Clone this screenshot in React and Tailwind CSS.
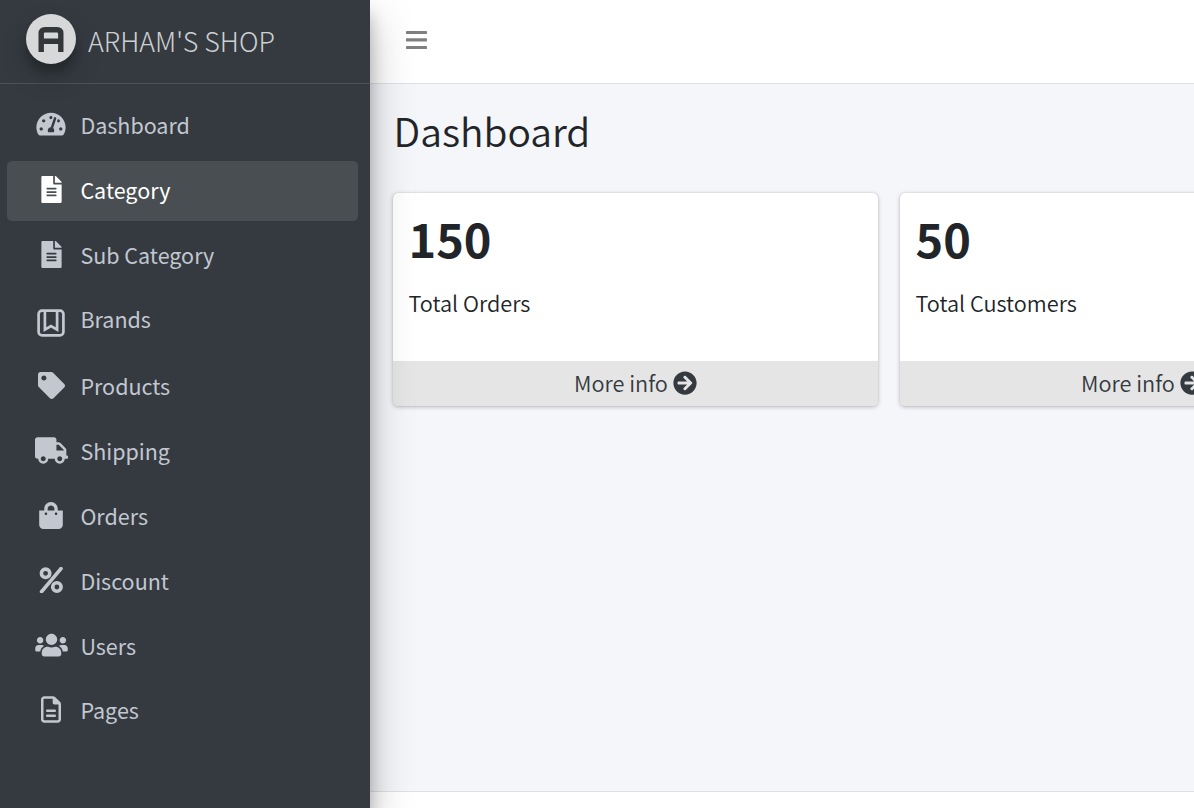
import React from "react";
import {
  FaTachometerAlt,
  FaFileAlt,
  FaTag,
  FaTruck,
  FaShoppingBag,
  FaUsers,
  FaArrowCircleRight,
} from "react-icons/fa";
import { FaRegFileLines } from "react-icons/fa6";

function BrandsIcon({ className }) {
  return (
    <svg viewBox="0 0 28 28" fill="none" stroke="currentColor" strokeWidth="2.7" strokeLinejoin="round" className={className}>
      <rect x="1.6" y="1.6" width="24.8" height="24.8" rx="3.4" />
      <path d="M7.9 2v18.6l6.1-3.6 6.1 3.6V2" strokeLinejoin="miter" />
    </svg>
  );
}

function PercentIcon({ className }) {
  return (
    <svg viewBox="0 0 24 26" fill="none" stroke="currentColor" className={className}>
      <circle cx="6.6" cy="6.3" r="4.2" strokeWidth="3.6" />
      <circle cx="17.9" cy="20" r="4.2" strokeWidth="3.6" />
      <path d="M22 1.6 2.6 24.6" strokeWidth="3.7" strokeLinecap="round" />
    </svg>
  );
}

function MenuIcon({ className }) {
  return (
    <svg viewBox="0 0 21 18" fill="currentColor" className={className}>
      <rect width="21" height="3" rx="0.4" />
      <rect y="7.3" width="21" height="3.2" rx="0.4" />
      <rect y="15" width="21" height="3" rx="0.4" />
    </svg>
  );
}

const items = [
  { label: "Dashboard", Icon: FaTachometerAlt, icon: "h-[26px] w-[30px]" },
  { label: "Category", Icon: FaFileAlt, icon: "h-[27px] w-[21px]", active: true },
  { label: "Sub Category", Icon: FaFileAlt, icon: "h-[27px] w-[21px]" },
  { label: "Brands", Icon: BrandsIcon, icon: "h-7 w-7 relative top-[5px]", row: "h-[61px] pb-[3px]" },
  { label: "Products", Icon: FaTag, icon: "h-[27px] w-[27px]" },
  { label: "Shipping", Icon: FaTruck, icon: "h-[27px] w-[33px]" },
  { label: "Orders", Icon: FaShoppingBag, icon: "h-[27px] w-[24px]" },
  { label: "Discount", Icon: PercentIcon, icon: "h-[26px] w-[24px]" },
  { label: "Users", Icon: FaUsers, icon: "h-[26px] w-[33px]" },
  { label: "Pages", Icon: FaRegFileLines, icon: "h-[27px] w-[20px]", row: "h-[60px] pb-[2px]" },
];

function NavItem({ label, Icon, icon, active, row }) {
  return (
    <li>
      <a
        className={`flex items-center rounded-[5px] pl-[25px] ${row || "h-[60px]"} ${
          active ? "bg-[#494e52] text-white" : "text-[#c2c7d0]"
        }`}
      >
        <span className="mb-[4px] flex w-[38px] shrink-0 justify-center">
          <Icon className={icon} />
        </span>
        <span className="mb-[2px] pl-[10.4px] text-[21.5px] leading-[36px]">{label}</span>
      </a>
    </li>
  );
}

function StatCard({ value, label }) {
  return (
    <div className="flex h-[213px] w-[485px] shrink-0 flex-col overflow-hidden rounded-[5px] bg-white shadow-[0_0_1px_rgba(0,0,0,0.2),0_1px_4px_rgba(0,0,0,0.25)]">
      <div className="flex-1 pt-[12px] pl-[15.5px]">
        <h3 className="text-[46.9px] leading-[66px] font-bold">{value}</h3>
        <p className="mt-[14px] text-[21.7px] leading-[36px] font-[350]">{label}</p>
      </div>
      <a className="flex h-[45px] items-center justify-center gap-[5px] bg-[#e5e5e5] text-[21.7px] font-[350] text-[#343a40]">
        <span className="mb-[2px] leading-[36px]">More info</span>
        <FaArrowCircleRight className="mb-[2px] h-[24px] w-[24px]" />
      </a>
    </div>
  );
}

export default function App() {
  return (
    <div className="flex h-[808px] w-[1194px] overflow-hidden bg-[#f4f6f9] font-['Noto_Sans_CJK_JP','Noto_Sans',sans-serif] text-[#212529]">
      <aside className="z-10 flex w-[370px] shrink-0 flex-col bg-[#343a40] shadow-[0_20px_41px_rgba(0,0,0,0.25),0_15px_15px_rgba(0,0,0,0.22)]">
        <div className="flex h-[84px] items-start border-b border-[#4b545c] pl-[26px] pt-[14px]">
          <div className="h-[50px] w-[50px] rounded-full bg-[#d6d8d9] shadow-[0_14px_28px_rgba(0,0,0,0.16),0_9px_9px_rgba(0,0,0,0.2)]">
            <svg viewBox="0 0 50 50" className="h-full w-full" fill="none" stroke="#343739" strokeWidth="5.4">
              <path d="M15.2 38V19.5q0-3.8 3.8-3.8h12q3.8 0 3.8 3.8V38M15.2 27.3h19.6" />
            </svg>
          </div>
          <span className="ml-3 mt-[5px] text-[26.9px] leading-[44px] font-light text-[#ced0d2]">ARHAM'S SHOP</span>
        </div>
        <ul className="flex flex-col gap-[5px] pt-3 pr-3 pl-[7px]">
          {items.map((it) => (
            <NavItem key={it.label} {...it} />
          ))}
        </ul>
      </aside>
      <div className="flex min-w-0 flex-1 flex-col">
        <header className="flex h-[84px] shrink-0 items-start border-b border-[#dee2e6] bg-white pt-[31px] pl-[36px]">
          <MenuIcon className="h-[18px] w-[21px] text-[#808080]" />
        </header>
        <main className="min-h-0 flex-1 overflow-hidden pl-[23px]">
          <h1 className="pt-[18px] pl-[0.5px] text-[39px] leading-[56px] font-[350]">Dashboard</h1>
          <div className="mt-[35px] flex gap-[22px]">
            <StatCard value="150" label="Total Orders" />
            <StatCard value="50" label="Total Customers" />
          </div>
        </main>
        <footer className="h-[17px] shrink-0 border-t border-[#dee2e6] bg-white" />
      </div>
    </div>
  );
}
